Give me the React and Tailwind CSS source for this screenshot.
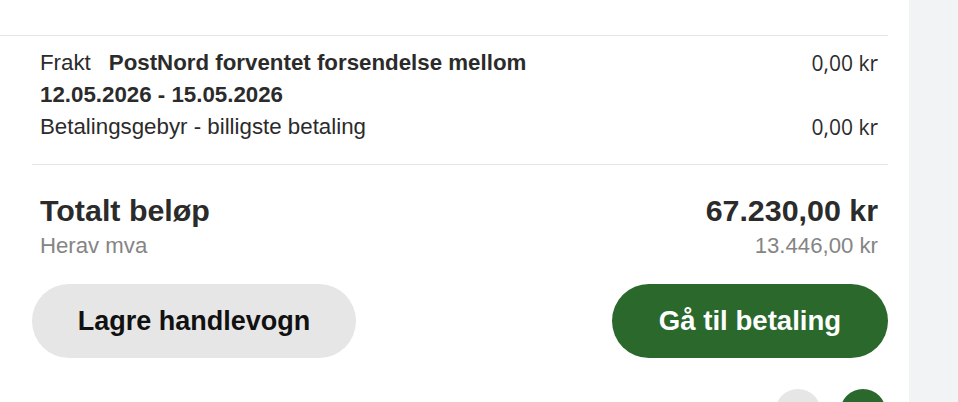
const rows = [
  { label: "Betalingsgebyr - billigste betaling", amount: "0,00 kr" },
];

export default function App() {
  return (
    <div className="flex min-h-[402px] w-full font-['Liberation_Sans',Arial,sans-serif] text-[#2b2b2b]">
      <main className="w-[909px] shrink-0 bg-white">
        <div className="h-[35px]" />
        <section className="mr-[21px] border-t border-[#e4e4e4]">
          <div className="ml-[32px] border-b border-[#e4e4e4] pt-[11px] pb-[21px] pl-[8px] pr-[10px] text-[22.3px] leading-[32px]">
            <div className="flex items-start justify-between">
              <p className="max-w-[560px]">
                <span className="mr-[18px]">Frakt</span>
                <span className="font-bold">
                  PostNord forventet forsendelse mellom 12.05.2026 - 15.05.2026
                </span>
              </p>
              <span className="font-['Open_Sans',sans-serif] text-[21px]">0,00 kr</span>
            </div>
            {rows.map((row) => (
              <div key={row.label} className="flex items-start justify-between">
                <span>{row.label}</span>
                <span className="font-['Open_Sans',sans-serif] text-[21px]">{row.amount}</span>
              </div>
            ))}
          </div>

          <div className="ml-[32px] pt-[27px]">
            <div className="pl-[8px] pr-[10px]">
              <div className="flex items-center justify-between text-[30.4px] font-bold leading-[36px]">
                <span>Totalt beløp</span>
                <span>67.230,00 kr</span>
              </div>
              <div className="mt-[2px] flex items-center justify-between text-[22.2px] leading-[32px] text-[#858585]">
                <span>Herav mva</span>
                <span>13.446,00 kr</span>
              </div>
            </div>

            <div className="mt-[22px] flex items-center justify-between">
              <button className="h-[74px] w-[324px] rounded-full bg-[#e6e6e6] text-[27px] font-bold text-[#111]">
                Lagre handlevogn
              </button>
              <button className="h-[74px] w-[276px] rounded-full bg-[#2a682c] text-[27.6px] font-bold text-white">
                Gå til betaling
              </button>
            </div>

            <div className="mt-[31px] flex justify-end gap-[19px] pr-[2px]">
              <span className="h-[46px] w-[46px] rounded-full bg-[#e6e6e6]" />
              <span className="h-[46px] w-[46px] rounded-full bg-[#2a682c]" />
            </div>
          </div>
        </section>
      </main>
      <aside className="flex-1 bg-[#f2f3f5]" />
    </div>
  );
}
